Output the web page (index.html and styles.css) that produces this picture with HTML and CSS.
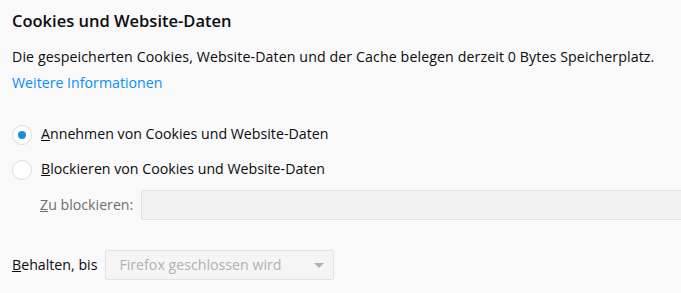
FILE: index.html
```html
<!DOCTYPE html>
<html lang="de">
<head>
  <meta charset="UTF-8" />
  <title>Cookies und Website-Daten</title>
  <link rel="stylesheet" href="styles.css">
</head>
<body>
  <section class="pane">
    <h2 class="title">Cookies und Website-Daten</h2>
    <div class="desc">
      <div>Die gespeicherten Cookies, Website-Daten und der Cache belegen derzeit 0 Bytes Speicherplatz.</div>
      <a class="link" href="#">Weitere Informationen</a>
    </div>

    <!-- accept / block -->
    <label class="row radio-row">
      <span class="radio checked"></span>
      <span><u>A</u>nnehmen von Cookies und Website-Daten</span>
    </label>
    <label class="row radio-row">
      <span class="radio"></span>
      <span><u>B</u>lockieren von Cookies und Website-Daten</span>
    </label>

    <div class="row block-row">
      <span class="muted"><u>Z</u>u blockieren:</span>
      <div class="textbox"></div>
    </div>

    <div class="row keep-row">
      <span><u>B</u>ehalten, bis</span>
      <div class="select">
        <span>Firefox geschlossen wird</span>
        <span class="arrow"></span>
      </div>
    </div>
  </section>
</body>
</html>
```

FILE: styles.css
```css
*{box-sizing:border-box}
body{
  margin:0;
  background:#f9f9fa;
  color:#0c0c0d;
  font-family:'Open Sans',sans-serif;
  font-size:14.2px;
  white-space:nowrap;
  overflow:hidden;
}
.pane{padding:0 0 0 12px}
.title{
  margin:10px 0 0;
  font-size:16.5px;
  line-height:22px;
  font-weight:600;
}
.desc{margin-top:12px;line-height:26px}
.desc div{letter-spacing:.1px}
.link{color:#0a8dff;text-decoration:none}

.row{display:flex;align-items:center;height:30px;line-height:20px}
.radio-row{margin-top:23px}
.radio-row + .radio-row{margin-top:5px}
.radio{
  width:20px;height:20px;
  border:1px solid #dcdcde;
  border-radius:50%;
  background:#fff;
  margin:2px 9px 0 0;
  display:flex;align-items:center;justify-content:center;
}
.radio.checked::after{
  content:"";
  width:8px;height:8px;
  border-radius:50%;
  background:#1a8fdd;
}

.block-row{margin-top:6px;padding-left:28px}
.muted{color:#6e6e70;margin-right:8px}
.textbox{
  flex:1;
  height:30px;
  margin-right:-2px;
  background:#f2f2f2;
  border:1px solid #e1e1e2;
  border-radius:2px 0 0 2px;
}

.keep-row{margin-top:30px}
.select{
  display:flex;align-items:center;justify-content:space-between;
  width:229px;height:30px;
  margin-left:8px;
  padding:0 9px 0 13px;
  background:#f5f5f5;
  border:1px solid #e3e3e4;
  border-radius:2px;
  color:#b1b1b3;
}
.arrow{
  width:0;height:0;
  border-left:5px solid transparent;
  border-right:5px solid transparent;
  border-top:5px solid #b1b1b3;
}
```
